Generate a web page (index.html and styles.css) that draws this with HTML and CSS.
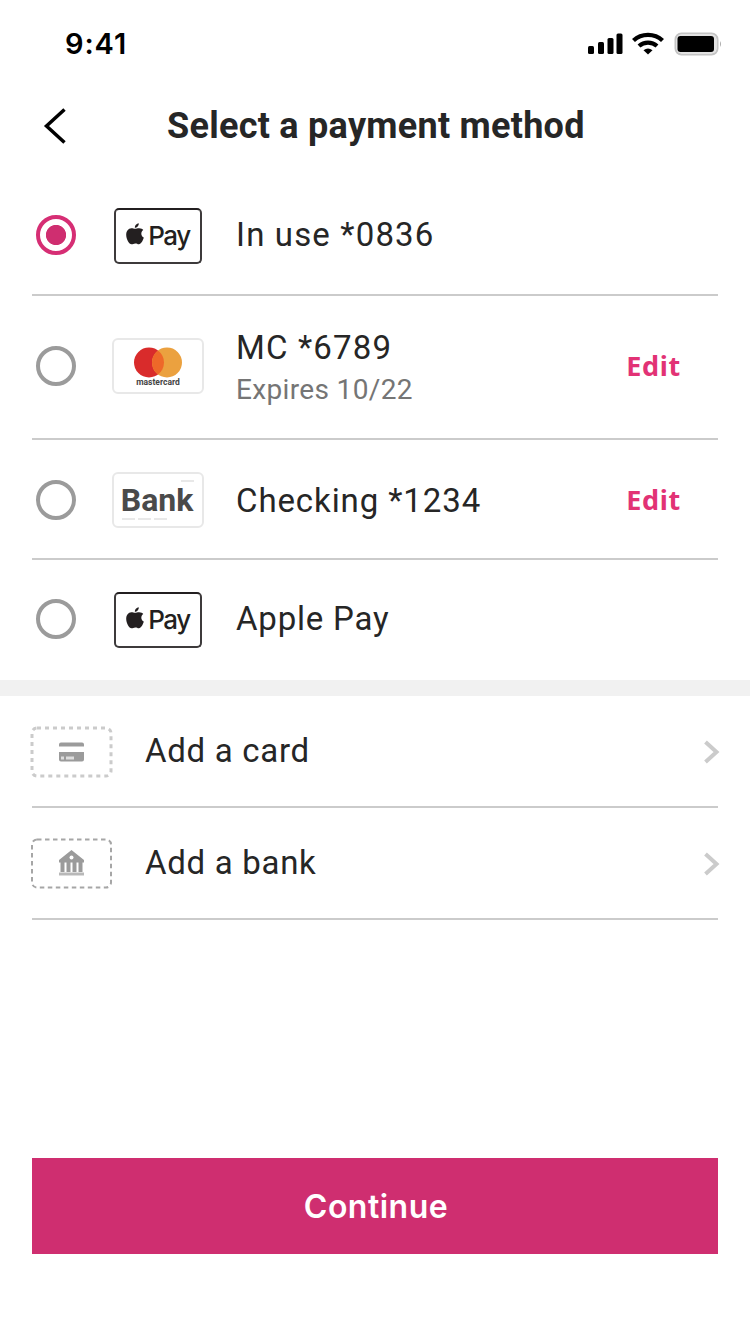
FILE: index.html
```html
<!DOCTYPE html>
<html lang="en">
<head>
<meta charset="utf-8">
<title>Select a payment method</title>
<link rel="stylesheet" href="styles.css">
</head>
<body>
<svg class="defs" width="0" height="0" aria-hidden="true">
  <symbol id="apple" viewBox="0 0 17 21">
    <path d="M8.600 5.600C9.600 5.600 10.800 4.900 12.400 4.900C14.400 4.900 15.700 5.600 16.400 6.700C13.700 8.500 14 12.600 16.900 13.900C16.100 16.700 14.300 20.200 12.300 20.300C10.900 20.400 10.400 19.600 8.800 19.600C7.200 19.600 6.500 20.400 5.200 20.400C2.800 20.400 .2 15.600 .1 11.500C0 7.600 2.200 5 5 4.900C6.500 4.900 7.600 5.600 8.600 5.600ZM8.300 4.500C8.200 2.300 10 .4 12.100.2C12.300 2.500 10.400 4.500 8.300 4.500Z" fill="#231f20"/>
  </symbol>
</svg>
<div class="screen">
  <div class="status">
    <span class="time">9:41</span>
    <svg class="status-icons" viewBox="0 0 136 24" width="136" height="24">
      <g fill="#000">
        <rect x="2" y="14" width="6" height="8" rx="1.500"/>
        <rect x="12" y="10" width="6" height="12" rx="1.500"/>
        <rect x="21.500" y="6" width="6" height="16" rx="1.500"/>
        <rect x="30.500" y="1.500" width="6" height="20.500" rx="1.500"/>
      </g>
      <g fill="none" stroke="#000" stroke-width="4.300">
        <path d="M47.500 8.500C55.500 1 68.500 1 76.500 8.500"/>
        <path d="M53 14C58 9.600 66 9.600 71 14"/>
      </g>
      <path d="M57.500 18.300Q62 14.500 66.500 18.300L62 22.500Z" fill="#000"/>
      <rect x="89.500" y="1.500" width="42" height="21" rx="6" fill="#fff" stroke="#c4c4c4" stroke-width="2"/>
      <rect x="91" y="3" width="39" height="18" rx="4" fill="#e2e2e2"/>
      <rect x="91.500" y="4" width="36.500" height="16" rx="3" fill="#000"/>
      <path d="M134 9Q136 12 134 15Z" fill="#aaa"/>
    </svg>
  </div>
  <header class="header">
    <svg class="back" viewBox="0 0 24 38" width="24" height="38"><path d="M21.500 2.500L3.500 19L21.500 35.500" fill="none" stroke="#000" stroke-width="3.500"/></svg>
    <h1 class="title">Select a payment method</h1>
  </header>

  <main>
    <section class="methods">
      <div class="row first">
        <span class="radio checked"></span>
        <span class="badge apple-badge"><svg class="apple" width="18" height="22"><use href="#apple"/></svg><span class="pay">Pay</span></span>
        <span class="label l-use">In use *0836</span>
      </div>
      <div class="row tall">
        <span class="radio"></span>
        <span class="badge mc-badge">
          <svg width="48" height="31" viewBox="0 0 48 31"><circle cx="15" cy="15.500" r="15" fill="#d92b2b"/><circle cx="33" cy="15.500" r="15" fill="#eba13f"/><path d="M24 3.500A15 15 0 0 1 24 27.500A15 15 0 0 1 24 3.500Z" fill="#ee6829"/></svg>
          <span class="mc-name">mastercard</span>
        </span>
        <span class="stack"><span class="label l-mc">MC *6789</span><span class="expires">Expires 10/22</span></span>
        <span class="edit">Edit</span>
      </div>
      <div class="row bank">
        <span class="radio"></span>
        <span class="badge bank-badge"><span class="bank-name">Bank</span>
          <svg class="bank-lines" width="88" height="52"><path d="M67 7H80M8 45H21M24 45H37M40 45H53" stroke="#e8e8e8" stroke-width="2"/></svg>
        </span>
        <span class="label l-check">Checking *1234</span>
        <span class="edit">Edit</span>
      </div>
      <div class="row last">
        <span class="radio"></span>
        <span class="badge apple-badge"><svg class="apple" width="18" height="22"><use href="#apple"/></svg><span class="pay">Pay</span></span>
        <span class="label l-apple">Apple Pay</span>
      </div>
    </section>
    <section class="additions">
      <div class="add">
        <svg width="84" height="52" viewBox="0 0 84 52">
          <rect x="3" y="2" width="79" height="48" rx="5" fill="none" stroke="#cbcbcb" stroke-width="3" stroke-dasharray="4 4"/>
          <path d="M30 20.500V18.500Q30 16.500 32 16.500H53Q55 16.500 55 18.500V20.500ZM30 26H55V33.500Q55 35.500 53 35.500H32Q30 35.500 30 33.500Z" fill="#9b9b9b"/>
          <path d="M32 32H35M37 32H45" stroke="#ddd" stroke-width="3"/>
        </svg>
        <span class="label l-add">Add a card</span>
        <svg class="next" width="18" height="28" viewBox="0 0 18 28"><path d="M3.500 4L14.500 14L3.500 24" fill="none" stroke="#cbcbcb" stroke-width="4"/></svg>
      </div>
      <div class="add">
        <svg width="84" height="52" viewBox="0 0 84 52">
          <rect x="3" y="1.500" width="79" height="48" rx="5" fill="none" stroke="#a6a6a6" stroke-width="2" stroke-dasharray="4.500 3.500"/>
          <path d="M42.500 12L55 22V24.500H30V22ZM31.500 24H35.500V34H31.500ZM37.500 24H41.500V34H37.500ZM43.500 24H47.500V34H43.500ZM49.500 24H53.500V34H49.500Z" fill="#9b9b9b"/>
          <circle cx="42.500" cy="19.500" r="2" fill="#fff"/>
          <path d="M30 36H55" stroke="#b8b8b8" stroke-width="3"/>
        </svg>
        <span class="label l-bank">Add a bank</span>
        <svg class="next" width="18" height="28" viewBox="0 0 18 28"><path d="M3.500 4L14.500 14L3.500 24" fill="none" stroke="#cbcbcb" stroke-width="4"/></svg>
      </div>
    </section>
  </main>
  <button class="continue">Continue</button>
</div>
</body>
</html>
```

FILE: styles.css
```css
* { box-sizing: border-box; }
body { margin: 0; background: #fff; }
.defs { position: absolute; }
.screen {
  width: 750px;
  height: 1334px;
  display: flex;
  flex-direction: column;
  color: #262626;
  font-family: Roboto, "Liberation Sans", sans-serif;
  white-space: nowrap;
}
.status {
  height: 88px;
  padding: 0 28px 0 65px;
  display: flex;
  justify-content: space-between;
  align-items: center;
}
.time { font: 600 29px/36px Inter, sans-serif; letter-spacing: 0.9px; color: #000; }
.header {
  height: 88px;
  padding-left: 43px;
  display: flex;
  align-items: center;
  padding-bottom: 12px;
}
.title { margin: 0 0 0 100px; font-size: 36px; line-height: 44px; font-weight: 700; letter-spacing: 0.27px; }
.row {
  height: 120px;
  margin: 0 32px;
  padding-left: 4px;
  display: grid;
  grid-template-columns: 40px 92px 1fr auto;
  column-gap: 36px;
  align-items: center;
  border-bottom: 2px solid #cbcbcb;
}
.tall { height: 144px; padding-bottom: 2px; }
.bank { padding-top: 2px; }
.last { border: 0; padding-bottom: 2px; }
.radio {
  width: 40px;
  height: 40px;
  border: 4px solid #9b9b9b;
  border-radius: 50%;
}
.checked {
  border-color: #d62e74;
  background: radial-gradient(circle, #cf2e70 9.7px, #fff 10.5px);
}
.badge {
  height: 56px;
  width: 92px;
  display: flex;
  align-items: center;
  justify-content: center;
  border: 2px solid #e8e8e8;
  border-radius: 6px;
}
.apple-badge {
  width: 88px;
  margin: 2px 0 0 2px;
  gap: 4px;
  border: 2px solid #3d3a3b;
  border-top-color: #231f20;
  border-radius: 5px;
}
.pay { font: 500 26px/32px Inter, sans-serif; letter-spacing: -1.4px; color: #231f20; }
.apple { margin-top: -4px; }
.mc-badge { flex-direction: column; }
.mc-name { font-size: 8.5px; line-height: 8px; font-weight: 700; color: #444; }
.bank-badge { display: grid; justify-items: center; }
.bank-name { grid-area: 1 / 1; align-self: center; margin-left: -2px; font-size: 32px; font-weight: 700; color: #4a4a4a; }
.bank-lines { grid-area: 1 / 1; }
.label { font-size: 33px; line-height: 40px; margin-left: -4px; }
.l-use { letter-spacing: 1.15px; }
.l-mc { letter-spacing: 1.15px; }
.l-check { letter-spacing: 0.9px; padding-top: 1px; }
.l-apple { letter-spacing: 0.8px; }
.l-add, .l-bank { letter-spacing: 0.7px; }
.stack { display: flex; flex-direction: column; gap: 4px; padding-top: 3px; }
.expires { margin-left: -4px; font-size: 28px; line-height: 36px; letter-spacing: 0.35px; color: #757575; }
.edit { margin-right: 37px; font: 700 27px/36px "Noto Sans", sans-serif; letter-spacing: 0.7px; color: #e23275; }
.additions { border-top: 16px solid #f1f1f1; }
.add {
  height: 112px;
  margin: 0 32px;
  padding-top: 2px;
  display: flex;
  align-items: center;
  border-bottom: 2px solid #cbcbcb;
}
.add > svg:first-child { margin-left: -3px; }
.add .label { margin: -2px 0 0 32px; }
.next { margin: 0 -2px 0 auto; }
.continue {
  margin: 238px 32px 0;
  height: 96px;
  padding: 2px 0 0 2px;
  border: 0;
  background: #cf2e70;
  color: #fff;
  font: 600 32px/40px Inter, sans-serif;
  letter-spacing: 0.5px;
}
```
